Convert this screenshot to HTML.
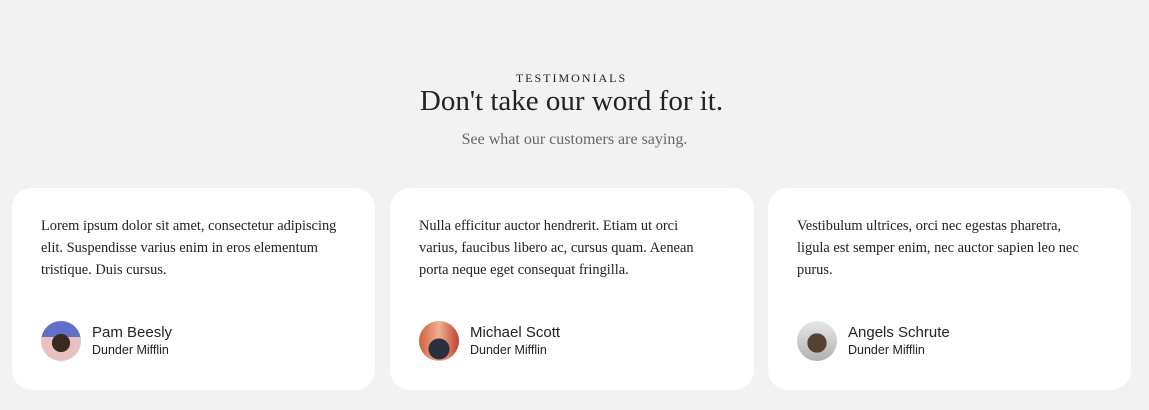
<!DOCTYPE html>
<html><head><style>
body{margin:0;width:1149px;height:410px;background:#f2f2f2;font-family:"Liberation Serif",serif;color:#222;overflow:hidden;position:relative}
.t{position:absolute;left:0;width:1149px;text-align:center}
.card{position:absolute;top:188px;height:202px;background:#fff;border-radius:20px;box-sizing:border-box;padding:27px 29px}
.card p{margin:0;font-size:14.4px;line-height:22px;color:#222;width:298px}
.au{position:absolute;left:29px;top:133px;display:flex;align-items:center}
.av{width:40px;height:40px;border-radius:50%;margin-right:11px}
.n{font-family:"Liberation Sans",sans-serif;font-size:15px;color:#222;line-height:19px}
.c{font-family:"Liberation Sans",sans-serif;font-size:12.5px;color:#222;line-height:17px}
</style></head><body>
<div class="t" style="top:71px;font-size:12px;letter-spacing:2px;left:-3px">TESTIMONIALS</div>
<div class="t" style="top:85px;font-size:29px;left:-3px">Don't take our word for it.</div>
<div class="t" style="top:131px;font-size:16px;color:#666">See what our customers are saying.</div>
<div class="card" style="left:12px;width:363px"><p>Lorem ipsum dolor sit amet, consectetur adipiscing elit. Suspendisse varius enim in eros elementum tristique. Duis cursus.</p>
<div class="au"><div class="av" style="background:radial-gradient(circle at 50% 55%,#3a2a22 0 30%,transparent 31%),linear-gradient(#6070c8 0 40%,#e8c0c0 40%)"></div><div><div class="n">Pam Beesly</div><div class="c">Dunder Mifflin</div></div></div></div>
<div class="card" style="left:390px;width:364px"><p>Nulla efficitur auctor hendrerit. Etiam ut orci varius, faucibus libero ac, cursus quam. Aenean porta neque eget consequat fringilla.</p>
<div class="au"><div class="av" style="background:radial-gradient(circle at 50% 70%,#2a3040 0 30%,transparent 31%),linear-gradient(90deg,#d06040,#f0b090,#c04030)"></div><div><div class="n">Michael Scott</div><div class="c">Dunder Mifflin</div></div></div></div>
<div class="card" style="left:768px;width:363px"><p>Vestibulum ultrices, orci nec egestas pharetra, ligula est semper enim, nec auctor sapien leo nec purus.</p>
<div class="au"><div class="av" style="background:radial-gradient(circle at 50% 55%,#5a4030 0 32%,transparent 33%),linear-gradient(#e8e8e8,#b0b0b0)"></div><div><div class="n">Angels Schrute</div><div class="c">Dunder Mifflin</div></div></div></div>
</body></html>
